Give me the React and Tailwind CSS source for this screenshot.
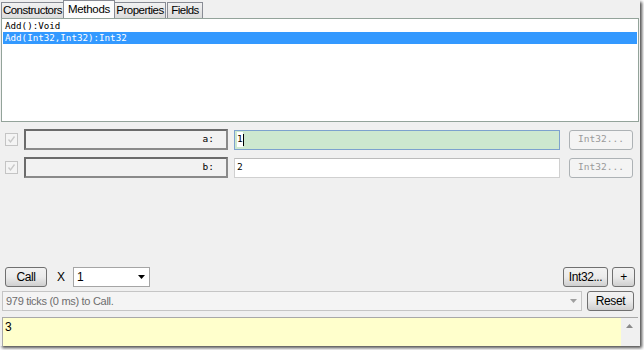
import { useState } from "react";

const ui = { fontFamily: '"Liberation Sans", Arial, sans-serif' };
const mono = { fontFamily: '"DejaVu Sans Mono", "Liberation Mono", monospace' };

function Tab({ label, active, w }) {
  if (active) {
    return (
      <div
        className="h-[18px] bg-[#fcfcfc] border border-b-0 border-[#898c95] -mx-[1px] relative z-10 text-[11.5px] tracking-[-0.3px] leading-[16px] text-black text-center"
        style={{ width: w }}
      >
        {label}
      </div>
    );
  }
  return (
    <div
      className="h-[16px] mt-[2px] bg-gradient-to-b from-[#f2f2f2] to-[#dcdcdc] border border-b-0 border-[#898c95] text-[11.5px] tracking-[-0.5px] leading-[15px] text-black text-center"
      style={{ width: w }}
    >
      {label}
    </div>
  );
}

function WinButton({ children, className = "", disabled }) {
  return (
    <div
      className={
        "h-[20px] rounded-[3px] border flex items-center justify-center text-[12px] tracking-[-0.4px] " +
        (disabled
          ? "border-[#adb2b5] bg-[#f4f4f4] text-[#9a9a9a] "
          : "border-[#707070] bg-gradient-to-b from-[#f2f2f2] via-[#ebebeb] to-[#cfcfcf] text-black ") +
        className
      }
    >
      {children}
    </div>
  );
}

function Check() {
  return (
    <div className="w-[13px] h-[13px] border border-[#c4c4c4] bg-[#f4f4f4] flex items-center justify-center">
      <svg width="9" height="9" viewBox="0 0 9 9">
        <path d="M1.5 4.5 L3.5 7 L7.5 1.5" fill="none" stroke="#c8c8c8" strokeWidth="1.3" />
      </svg>
    </div>
  );
}

function ParamRow({ name, value, active }) {
  return (
    <div className="flex items-center h-[21px] mt-[7px]">
      <div className="ml-[5px]">
        <Check />
      </div>
      <div
        className="ml-[6px] w-[204px] h-[21px] border-2 border-t-[#6b6b6b] border-l-[#6b6b6b] border-r-[#8a8a8a] border-b-[#8a8a8a] bg-[#f2f2f2] flex items-center justify-end pr-[12px] text-[9.5px] text-black"
        style={mono}
      >
        {name}
      </div>
      <div
        className={
          "ml-[6px] w-[326px] h-[20px] border flex items-center pl-[2px] text-[9.5px] text-black " +
          (active ? "border-[#7da2ce] bg-[#cde8cf]" : "border-[#d0d0d0] border-t-[#bcbcbc] bg-white")
        }
        style={mono}
      >
        {active ? (
          <span className="flex items-center">
            <span className="bg-white">{value}</span>
            <span className="w-[1px] h-[12px] bg-black" />
          </span>
        ) : (
          value
        )}
      </div>
      <WinButton disabled className="ml-[9px] w-[64px]">
        <span style={mono} className="text-[9.5px] tracking-normal">Int32...</span>
      </WinButton>
    </div>
  );
}

export default function App() {
  const [sel] = useState(1);
  const methods = ["Add():Void", "Add(Int32,Int32):Int32"];

  return (
    <div className="w-[644px] h-[350px] bg-white" style={ui}>
      <div className="w-[640px] h-[346px] bg-[#f0f0f0] flex flex-col shadow-[2px_2px_3px_rgba(0,0,0,0.7)]">
        <div className="flex items-end h-[18px] pl-[1px]">
          <Tab label="Constructors" w={63} />
          <Tab label="Methods" active w={52} />
          <Tab label="Properties" w={52} />
          <div className="ml-[1px]">
            <Tab label="Fields" w={36} />
          </div>
        </div>
        <div className="h-[104px] mx-[1px] border border-[#93a39a] bg-white pt-[1px] pl-[1px] pr-[1px]">
          {methods.map((m, i) => (
            <div
              key={m}
              className={
                "h-[12px] pl-[2px] text-[9.2px] leading-[12px] " +
                (i === sel ? "bg-[#3399ff] text-white" : "text-black")
              }
              style={mono}
            >
              {m}
            </div>
          ))}
        </div>

        <ParamRow name="a:" value="1" active />
        <ParamRow name="b:" value="2" />

        <div className="flex-1" />

        <div className="flex items-center h-[20px] px-[5px]">
          <WinButton className="w-[42px]">Call</WinButton>
          <span className="ml-[10px] text-[12px] text-black">X</span>
          <div className="ml-[8px] w-[77px] h-[20px] bg-white border border-[#a5a5a5] flex items-center justify-between pl-[3px] pr-[4px] text-[12px] text-black">
            <span>1</span>
            <svg width="7" height="4" viewBox="0 0 7 4">
              <path d="M0 0 H7 L3.5 4 Z" fill="#000" />
            </svg>
          </div>
          <div className="flex-1" />
          <WinButton className="w-[45px]">Int32...</WinButton>
          <WinButton className="ml-[4px] w-[23px]">+</WinButton>
        </div>

        <div className="flex items-center h-[20px] mt-[4px] pl-[2px] pr-[5px]">
          <div className="w-[580px] h-[20px] border border-[#c5c5c5] bg-[#f4f4f4] flex items-center justify-between pl-[3px] pr-[4px] text-[11px] tracking-[-0.3px] text-[#6d6d6d]">
            <span>979 ticks (0 ms) to Call.</span>
            <svg width="7" height="4" viewBox="0 0 7 4">
              <path d="M0 0 H7 L3.5 4 Z" fill="#a0a0a0" />
            </svg>
          </div>
          <WinButton className="ml-[5px] w-[47px]">Reset</WinButton>
        </div>

        <div className="mt-[6px] mx-[2px] flex-none h-[29px] border-t border-l border-[#a8a8a8] bg-[#ffffcc] flex">
          <div className="flex-1 pl-[2px] pt-[2px] text-[12px] leading-[14px] text-black">3</div>
          <div className="w-[17px] bg-[#f0f0f0] flex justify-center pt-[6px]">
            <svg width="7" height="4" viewBox="0 0 7 4">
              <path d="M0 4 H7 L3.5 0 Z" fill="#8a8a8a" />
            </svg>
          </div>
        </div>
      </div>
    </div>
  );
}
